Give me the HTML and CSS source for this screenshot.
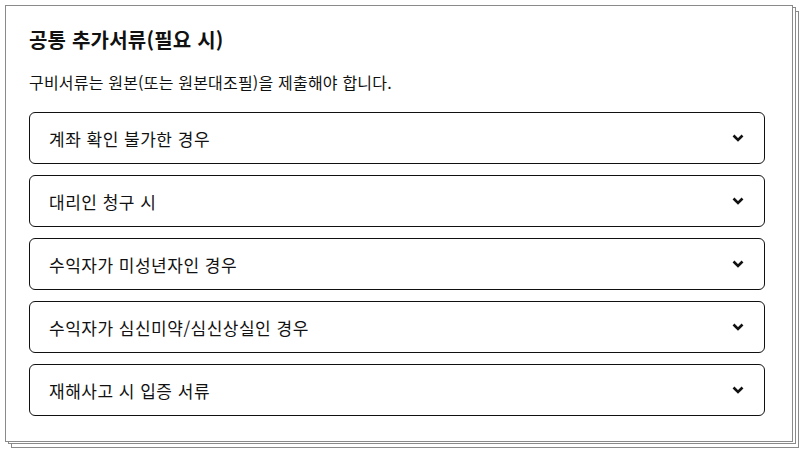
FILE: index.html
```html
<!DOCTYPE html>
<html lang="ko">
<head>
    <meta charset="utf-8">
    <link rel="stylesheet" href="styles.css">
</head>
<body>
    <div class="doc-card">
        <h2 class="doc-title">공통 추가서류(필요 시)</h2>
        <p class="doc-desc">구비서류는 원본(또는 원본대조필)을 제출해야 합니다.</p>

        <div class="acc-list">
            <button class="acc-item" type="button">
                <span>계좌 확인 불가한 경우</span>
                <svg class="acc-icon" viewBox="0 0 12 8" width="12" height="8"><path d="M1.5 1.5 6 6l4.5-4.5" /></svg>
            </button>
            <button class="acc-item" type="button">
                <span>대리인 청구 시</span>
                <svg class="acc-icon" viewBox="0 0 12 8" width="12" height="8"><path d="M1.5 1.5 6 6l4.5-4.5" /></svg>
            </button>
            <button class="acc-item" type="button">
                <span>수익자가 미성년자인 경우</span>
                <svg class="acc-icon" viewBox="0 0 12 8" width="12" height="8"><path d="M1.5 1.5 6 6l4.5-4.5" /></svg>
            </button>
            <button class="acc-item" type="button">
                <span>수익자가 심신미약/심신상실인 경우</span>
                <svg class="acc-icon" viewBox="0 0 12 8" width="12" height="8"><path d="M1.5 1.5 6 6l4.5-4.5" /></svg>
            </button>
            <button class="acc-item" type="button">
                <span>재해사고 시 입증 서류</span>
                <svg class="acc-icon" viewBox="0 0 12 8" width="12" height="8"><path d="M1.5 1.5 6 6l4.5-4.5" /></svg>
            </button>
        </div>
    </div>
</body>
</html>
```

FILE: styles.css
```css
:root {
    --frame-gray: #8a8a8a;
    --ink: #111111;
}

body {
    margin: 0;
    padding: 5px 12px 12px 5px;
    background: white;
    font-family: "Noto Sans CJK KR", "Noto Sans", sans-serif;
    color: var(--ink);
}

.doc-card {
    box-sizing: border-box;
    width: 788px;
    height: 437px;
    padding: 21px 27px 0 23px;
    background: white;
    border: 1px solid var(--frame-gray);
    box-shadow:
        3px 2px 0 -1px white,
        3px 2px 0 0 var(--frame-gray),
        6px 6px 0 -1px white,
        6px 6px 0 0 var(--frame-gray);
}

.doc-title {
    margin: 0;
    font-size: 20px;
    font-weight: bold;
    line-height: 26px;
    letter-spacing: 0.2px;
}

.doc-desc {
    margin: 18px 0 0;
    font-size: 16px;
    line-height: 22px;
    letter-spacing: 0.2px;
}

.acc-list {
    margin-top: 19px;
    display: flex;
    flex-direction: column;
    gap: 11px;
}

.acc-item {
    box-sizing: border-box;
    height: 52px;
    padding: 0 20px 0 19px;
    display: flex;
    align-items: center;
    justify-content: space-between;
    background: white;
    border: 1px solid var(--ink);
    border-radius: 6px;
    font-family: inherit;
    font-size: 17px;
    color: var(--ink);
    letter-spacing: 0.5px;
    text-align: left;
    cursor: pointer;
}

.acc-icon {
    fill: none;
    stroke: var(--ink);
    stroke-width: 2.6;
}
```
